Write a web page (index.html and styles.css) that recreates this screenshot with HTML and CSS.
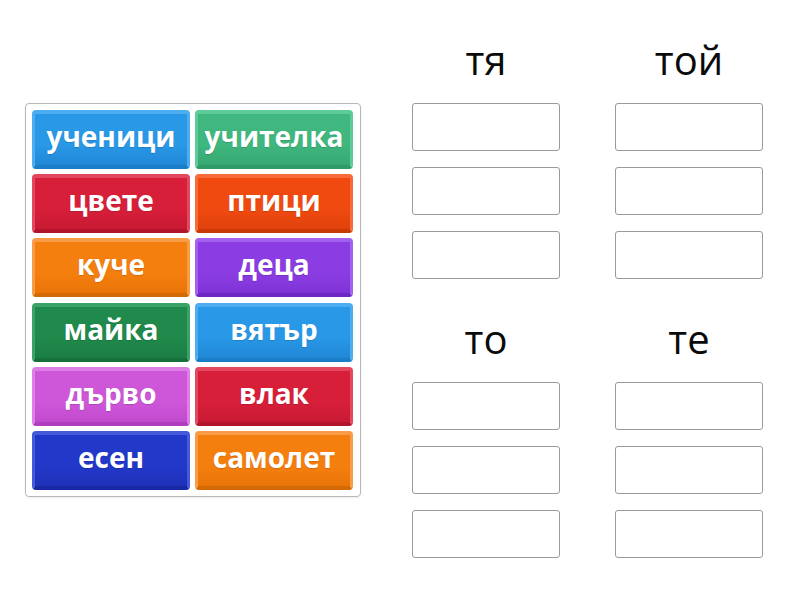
FILE: index.html
```html
<!DOCTYPE html>
<html lang="bg">
<head>
<meta charset="utf-8">
<title>Групиране</title>
<link rel="stylesheet" href="styles.css">
</head>
<body>
<main class="page">
  <section class="bank">
    <div class="tile blue">ученици</div>
    <div class="tile green">учителка</div>
    <div class="tile red">цвете</div>
    <div class="tile redorange">птици</div>
    <div class="tile orange">куче</div>
    <div class="tile purple">деца</div>
    <div class="tile darkgreen">майка</div>
    <div class="tile blue">вятър</div>
    <div class="tile pink">дърво</div>
    <div class="tile red">влак</div>
    <div class="tile navy">есен</div>
    <div class="tile orange">самолет</div>
  </section>
  <section class="groups">
    <div class="group">
      <h2 class="group-title">тя</h2>
      <div class="slot"></div><div class="slot"></div><div class="slot"></div>
    </div>
    <div class="group">
      <h2 class="group-title">той</h2>
      <div class="slot"></div><div class="slot"></div><div class="slot"></div>
    </div>
    <div class="group">
      <h2 class="group-title">то</h2>
      <div class="slot"></div><div class="slot"></div><div class="slot"></div>
    </div>
    <div class="group">
      <h2 class="group-title">те</h2>
      <div class="slot"></div><div class="slot"></div><div class="slot"></div>
    </div>
  </section>
</main>
</body>
</html>
```

FILE: styles.css
```css
html, body {
  margin: 0;
  padding: 0;
  background: #ffffff;
}
body {
  font-family: "Open Sans", "Liberation Sans", sans-serif;
  width: 800px;
  height: 600px;
  overflow: hidden;
}
.page {
  display: flex;
  align-items: flex-start;
  padding-left: 25px;
}
.bank {
  margin-top: 103px;
  width: 336px;
  box-sizing: border-box;
  border: 1px solid #b8b8b8;
  border-radius: 4px;
  padding: 6px 7px 6px 6px;
  display: grid;
  grid-template-columns: 158px 158px;
  grid-auto-rows: 59px;
  column-gap: 5px;
  row-gap: 5.2px;
  box-shadow: 0 1px 2px rgba(0,0,0,0.08);
}
.tile {
  --face: #2a98e6;
  --light: #4db0f0;
  --dark: #1b7bc6;
  box-sizing: border-box;
  border-radius: 4px;
  border-style: solid;
  border-width: 4px 3px 4px 3px;
  border-color: var(--light) var(--light) var(--dark) var(--light);
  background: linear-gradient(to bottom, var(--face) 0%, var(--face) 60%, var(--dark2, var(--face)) 100%);
  color: #ffffff;
  font-weight: 700;
  font-size: 28px;
  line-height: 1;
  display: flex;
  align-items: center;
  justify-content: center;
  padding-bottom: 7px;
  text-shadow: 0 1px 1px rgba(0,0,0,0.15);
  letter-spacing: 0;
}
.blue { --face: #2898e7; --light: #4cadf0; --dark: #1a7dc8; --dark2: #2188d6; }
.green { --face: #3fb77e; --light: #5dcb97; --dark: #2f9c68; --dark2: #38a872; }
.red { --face: #d81f3a; --light: #e2485f; --dark: #b2142b; --dark2: #c81a33; }
.redorange { --face: #f04a10; --light: #f76b3b; --dark: #c93906; --dark2: #e0420b; }
.orange { --face: #f57f0e; --light: #f99c48; --dark: #d46a05; --dark2: #e97509; }
.purple { --face: #8b3de3; --light: #a261ef; --dark: #6e27c3; --dark2: #7f33d6; }
.darkgreen { --face: #1f8a4b; --light: #3ba367; --dark: #146f3a; --dark2: #1a7d43; }
.pink { --face: #cd56d9; --light: #dd80e6; --dark: #b13ebe; --dark2: #c24ace; }
.navy { --face: #2238c9; --light: #4559db; --dark: #1929a6; --dark2: #1e31b8; }

.groups {
  margin-left: 51px;
  margin-top: 35.5px;
  display: grid;
  grid-template-columns: 148px 148px;
  column-gap: 55px;
  row-gap: 36px;
}
.group {
  display: flex;
  flex-direction: column;
  gap: 16px;
}
.group-title {
  margin: 0 0 3px 0;
  height: 48px;
  font-weight: 400;
  font-size: 40px;
  line-height: 48px;
  text-align: center;
  color: #0a0a0a;
}
.slot {
  box-sizing: border-box;
  height: 48px;
  border: 1px solid #9a9a9a;
  border-radius: 3px;
  background: #ffffff;
}
```
